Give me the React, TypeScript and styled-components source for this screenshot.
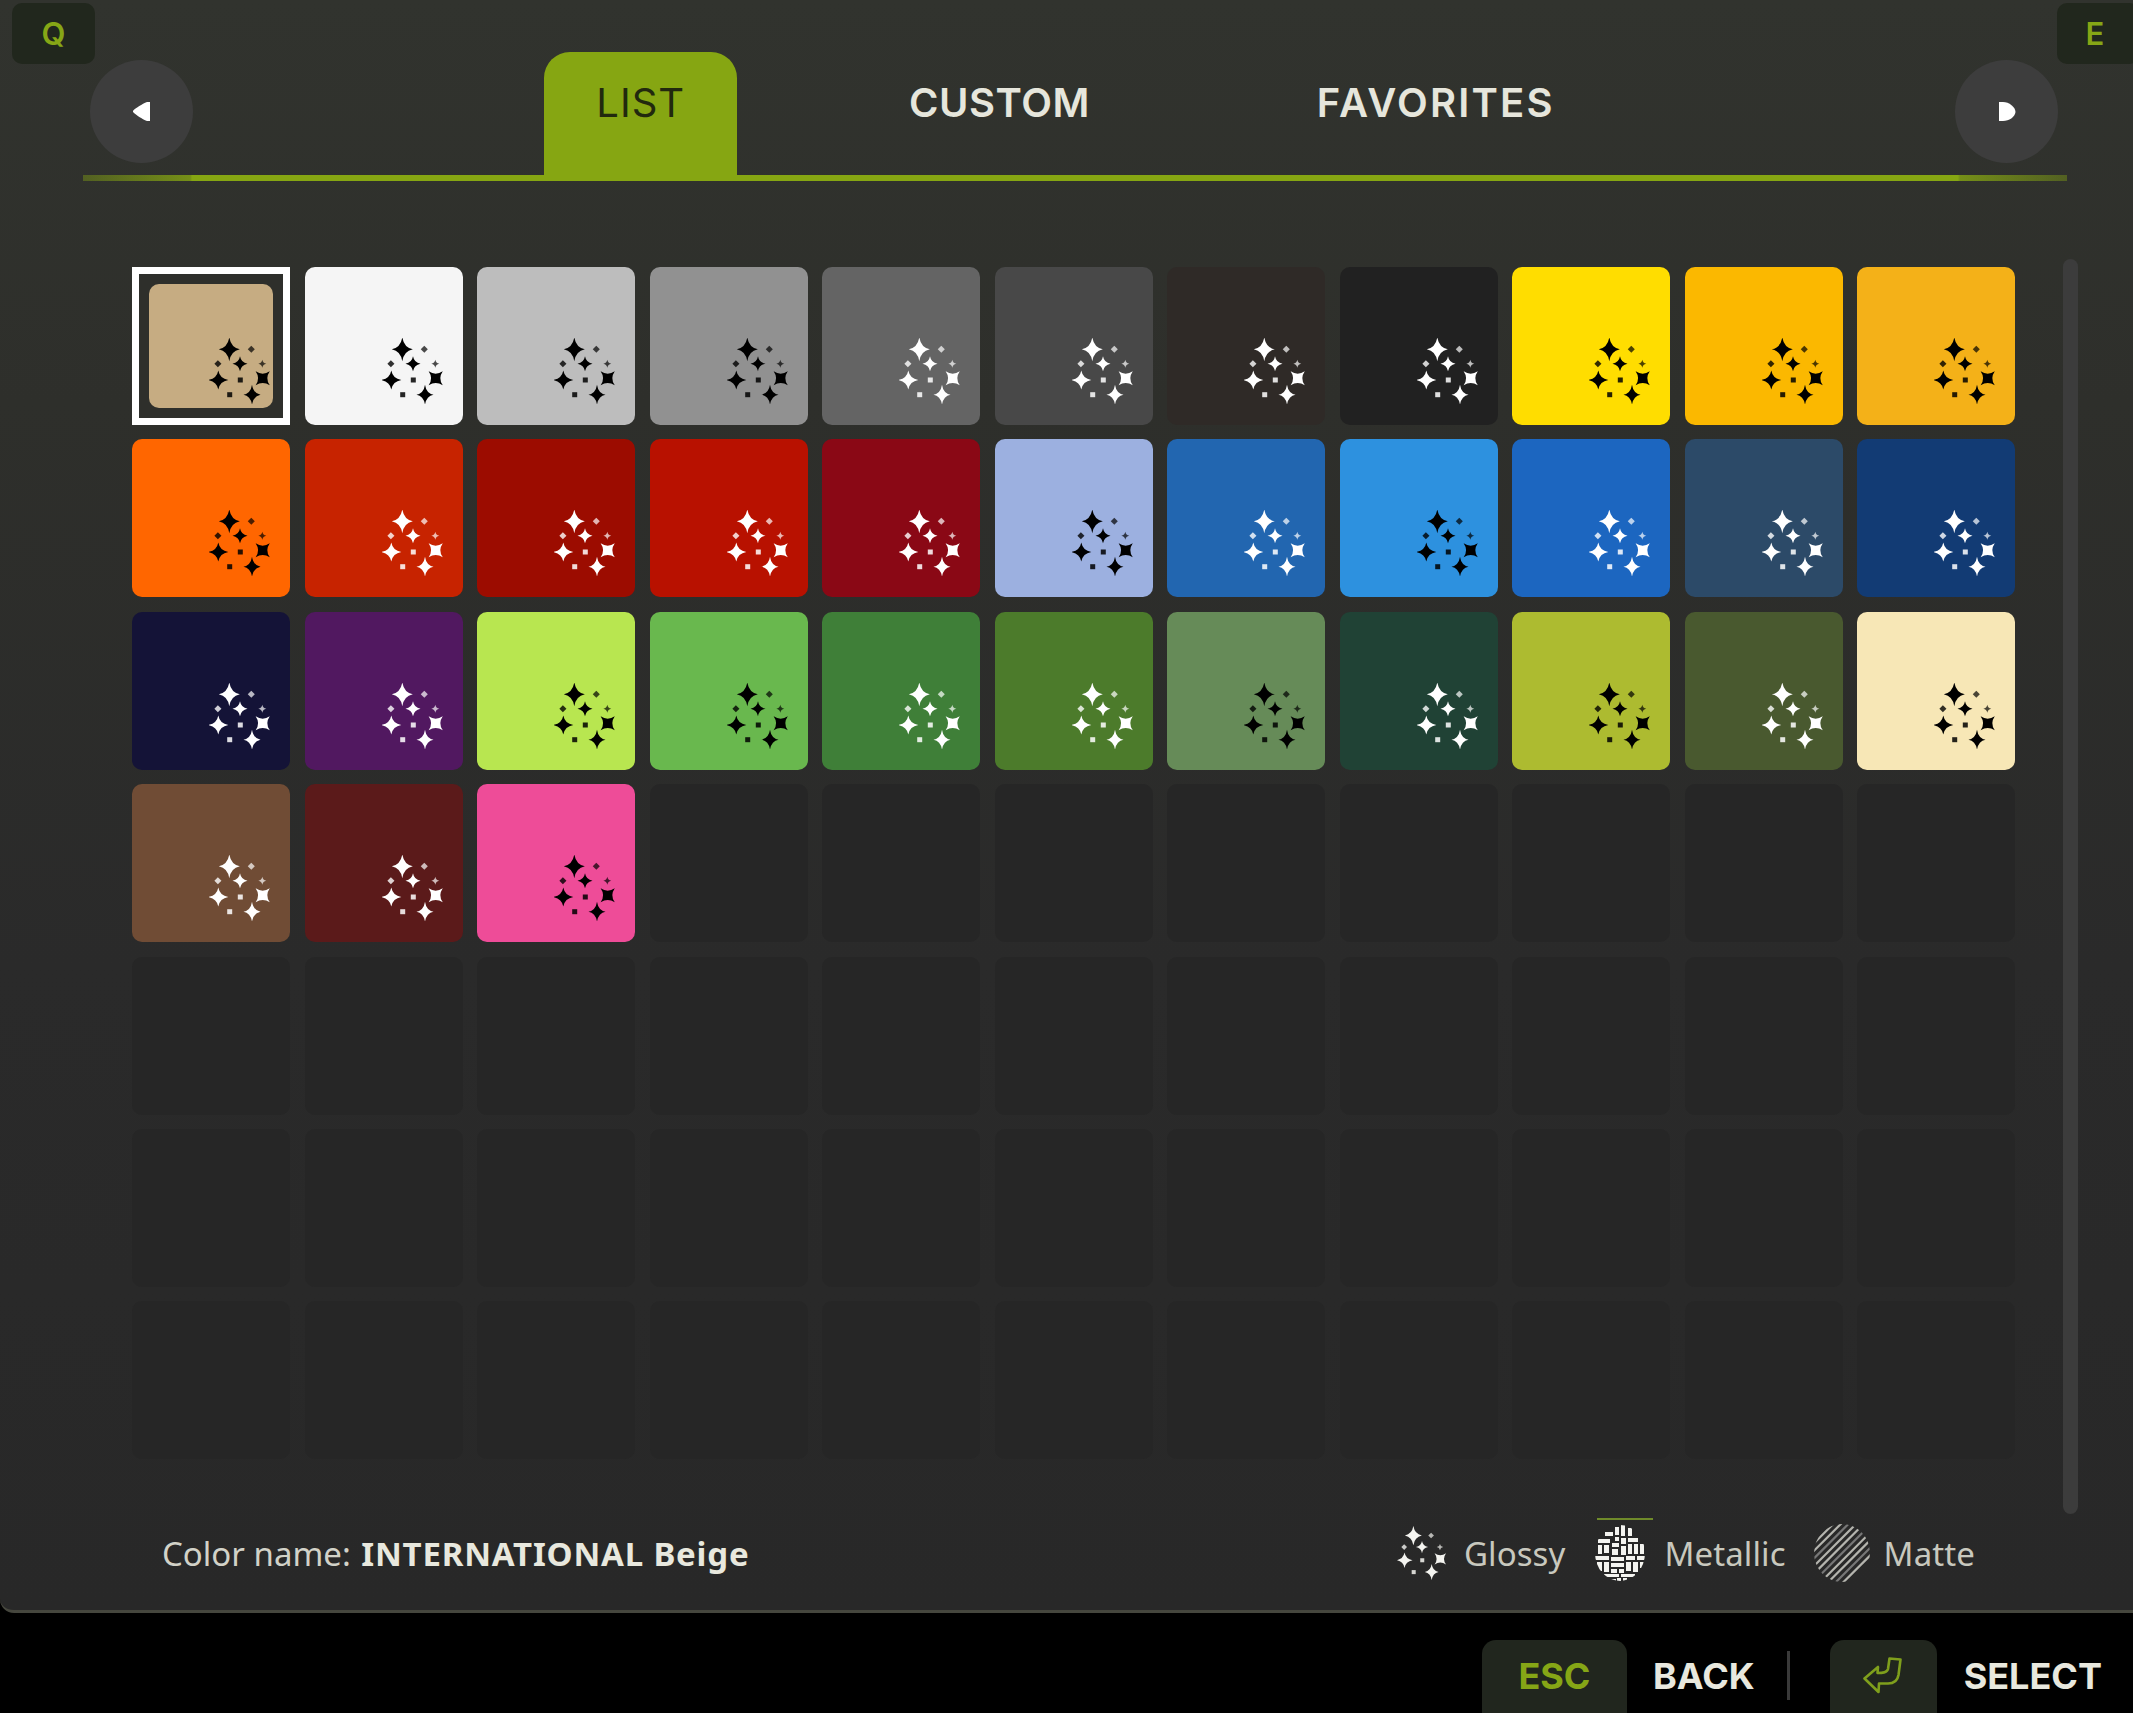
import React from 'react';
import styled, { createGlobalStyle } from 'styled-components';

const Global = createGlobalStyle`
  html, body { margin: 0; padding: 0; background: #000; }
  body { font-family: "Noto Sans", "Liberation Sans", sans-serif; overflow: hidden; }
`;

const Page = styled.div`
  width: 2133px;
  height: 1713px;
  display: flex;
  flex-direction: column;
  background: #000;
  overflow: hidden;
`;

const Panel = styled.section`
  position: relative;
  flex: 0 0 1613px;
  box-sizing: border-box;
  display: flex;
  flex-direction: column;
  background: linear-gradient(180deg, #31332e 0%, #2e2f2b 25%, #2a2a2a 60%, #282828 100%);
  border-bottom: 3px solid #46473e;
  border-bottom-left-radius: 14px;
`;

const KeyCap = styled.div<{ $side: 'left' | 'right' }>`
  position: absolute;
  top: 3px;
  ${p => (p.$side === 'left' ? 'left: 12px; width: 83px;' : 'right: -6px; width: 82px;')}
  height: 61px;
  border-radius: 10px;
  background: #21271d;
  color: #86a616;
  font-family: Inter, "Noto Sans", sans-serif;
  font-size: 31px;
  font-weight: 600;
  display: flex;
  align-items: center;
  justify-content: center;
  ${p => (p.$side === 'right' ? 'padding-right: 6px; box-sizing: border-box;' : '')}
`;

const Header = styled.header`
  display: flex;
  align-items: flex-start;
  justify-content: space-between;
  margin: 0 66px 0 83px;
  padding: 52px 9px 0 7px;
  height: 123px;
  box-sizing: content-box;
`;

const ArrowButton = styled.button`
  width: 103px;
  height: 103px;
  margin-top: 8px;
  padding: 0;
  border: 0;
  border-radius: 50%;
  background: #3d3d3d;
  display: flex;
  align-items: center;
  justify-content: center;
`;

const Tabs = styled.nav`
  display: flex;
  gap: 121px;
`;

const Tab = styled.div<{ $active?: boolean; $track: number }>`
  height: 123px;
  box-sizing: border-box;
  padding: ${p => (p.$active ? '25px 51.5px 0 52px' : '25px 53px 0')};
  margin: ${p => (p.$active ? '0 -1.5px 0 4px' : '0')};
  border-radius: 26px 26px 0 0;
  font-family: Inter, "Noto Sans", sans-serif;
  font-size: 40px;
  line-height: 52px;
  letter-spacing: ${p => p.$track}px;
  font-weight: ${p => (p.$active ? 400 : 600)};
  color: ${p => (p.$active ? '#22290e' : '#e6e6dc')};
  background: ${p => (p.$active ? '#86a612' : 'transparent')};
`;

const Rule = styled.div`
  height: 6px;
  margin: 0 66px 0 83px;
  background: linear-gradient(90deg, rgba(134,166,18,0.4) 0%, rgba(134,166,18,0.8) 5.4%, #86a612 5.5%, #86a612 94.5%, rgba(134,166,18,0.8) 94.6%, rgba(134,166,18,0.4) 100%);
`;

const Content = styled.div`
  display: flex;
  align-items: flex-start;
  margin-top: 78px;
  padding-left: 132px;
`;

const Grid = styled.div`
  display: grid;
  grid-template-columns: repeat(11, 158px);
  grid-auto-rows: 158px;
  column-gap: 14.5px;
  row-gap: 14.4px;
  padding-top: 8px;
`;

const Cell = styled.div<{ $bg?: string; $selected?: boolean }>`
  position: relative;
  box-sizing: border-box;
  border-radius: ${p => (p.$selected ? '0' : '10px')};
  background: ${p => p.$bg ?? '#262626'};
  ${p => (p.$selected ? 'border: 7px solid #fff; background: #2e2f2b; padding: 10px;' : '')}
`;

const SwatchFill = styled.div<{ $bg: string }>`
  width: 100%;
  height: 100%;
  border-radius: 10px;
  background: ${p => p.$bg};
`;

const SparkleSlot = styled.span`
  position: absolute;
  left: 77px;
  top: 71px;
  display: block;
  line-height: 0;
`;

const SparkleSlotSelected = styled(SparkleSlot)`
  left: 70px;
  top: 64px;
`;

const ScrollTrack = styled.div`
  width: 15px;
  height: 1255px;
  margin-left: 48px;
  border-radius: 8px;
  background: #3c3c3c;
`;

const InfoRow = styled.div`
  display: flex;
  align-items: center;
  justify-content: space-between;
  margin-top: 8px;
  padding: 0 158px 0 162px;
  height: 62px;
`;

const ColorName = styled.div`
  font-size: 33px;
  color: #d2d2c8;
  letter-spacing: 0;
  b { font-weight: 700; color: #e8e8de; letter-spacing: 0.8px; margin-left: 2px; }
`;

const Legend = styled.div`
  display: flex;
  align-items: center;
`;

const LegendItem = styled.div<{ $gap: number; $after: number }>`
  display: flex;
  align-items: center;
  gap: ${p => p.$gap}px;
  margin-right: ${p => p.$after}px;
  font-size: 33px;
  color: #c8c8be;
  letter-spacing: 0.1px;
`;

const MetallicMark = styled.span`
  position: relative;
  display: block;
  line-height: 0;
  &::before {
    content: '';
    position: absolute;
    left: 2px;
    right: -6px;
    top: -7px;
    height: 2px;
    background: #6f8a2a;
  }
`;

const Footer = styled.footer`
  flex: 1;
  display: flex;
  justify-content: flex-end;
  padding: 27px 31px 0 0;
  color: #e8e8de;
  font-family: Inter, "Noto Sans", sans-serif;
  font-size: 36px;
  font-weight: 700;
`;

const FooterKey = styled.div<{ $w: number }>`
  width: ${p => p.$w}px;
  height: 90px;
  border-radius: 14px;
  background: #21261e;
  color: #86a616;
  display: flex;
  justify-content: center;
  padding-top: 10px;
  box-sizing: border-box;
  line-height: 52px;
`;

const FooterLabel = styled.div<{ $left: number }>`
  margin-left: ${p => p.$left}px;
  padding-top: 10px;
  line-height: 52px;
`;

const Divider = styled.div`
  width: 3px;
  height: 49px;
  margin: 11px 40px 0 32px;
  background: #3a3a3a;
`;

const EnterWrap = styled.span`
  display: block;
  margin-top: 7px;
  line-height: 0;
`;

const star = (cx: number, cy: number, r: number, ry = r) => {
  const k = 0.15;
  const a = r * k;
  const b = ry * k;
  return `M${cx} ${cy - ry}Q${cx + a} ${cy - b} ${cx + r} ${cy}Q${cx + a} ${cy + b} ${cx} ${cy + ry}Q${cx - a} ${cy + b} ${cx - r} ${cy}Q${cx - a} ${cy - b} ${cx} ${cy - ry}Z`;
};

const Sparkles = ({ color, w = 62, h = 66 }: { color: string; w?: number; h?: number }) => (
  <svg width={w} height={h} viewBox="0 0 62 66">
    <g fill={color}>
      <path d={star(20.3, 11.3, 10.5, 12)} />
      <rect x="39.8" y="8.8" width="5" height="5" transform="rotate(45 42.3 11.3)" opacity="0.7" />
      <rect x="6.4" y="23.2" width="5" height="5" transform="rotate(45 8.9 25.7)" opacity="0.8" />
      <path d={star(31, 25.7, 7.5, 7.5)} />
      <path d={star(53.3, 25.7, 4, 4)} opacity="0.7" />
      <path d={star(9.3, 42, 10, 9.5)} />
      <rect x="28.8" y="39.5" width="5" height="5" opacity="0.85" />
      <path d={star(53.7, 40.3, 10, 10)} transform="rotate(45 53.7 40.3)" />
      <rect x="18.2" y="54.2" width="5" height="5" opacity="0.85" />
      <path d={star(43, 56.7, 8.5, 10)} />
    </g>
  </svg>
);

const weave: [number, number, number, number][] = [
  [20, 2, 4, 8], [26, 0, 4, 11], [33, 3, 4, 8],
  [10, 7, 8, 4], [20, 12, 4, 4], [26, 13, 5, 6], [33, 13, 10, 4],
  [3, 14, 12, 4], [3, 20, 4, 9], [9, 20, 5, 8], [17, 18, 7, 4], [17, 24, 6, 6], [26, 21, 5, 9], [33, 19, 4, 10], [39, 19, 4, 10], [45, 19, 4, 10],
  [0, 31, 14, 4], [16, 32, 13, 4], [31, 31, 9, 4], [42, 31, 8, 4],
  [2, 37, 5, 9], [9, 37, 5, 10], [16, 38, 13, 4], [31, 37, 5, 9], [38, 37, 5, 10], [45, 37, 4, 6], [16, 44, 6, 4], [24, 44, 5, 4],
  [9, 49, 15, 3], [26, 49, 14, 3], [16, 54, 5, 2], [22, 53, 4, 3], [28, 53, 4, 3],
];

const MetallicIcon = () => (
  <svg width="52" height="56" viewBox="0 0 52 56">
    <defs>
      <clipPath id="metal-clip"><ellipse cx="25" cy="28" rx="25" ry="28" /></clipPath>
    </defs>
    <g fill="#f4f4f0" clipPath="url(#metal-clip)">
      {weave.map(([x, y, w, h], i) => <rect key={i} x={x} y={y} width={w} height={h} />)}
    </g>
  </svg>
);

const MatteIcon = () => (
  <svg width="56" height="58" viewBox="0 0 56 58">
    <defs>
      <clipPath id="matte-clip"><ellipse cx="28" cy="29" rx="28" ry="29" /></clipPath>
    </defs>
    <g clipPath="url(#matte-clip)" strokeWidth="2.2">
      {Array.from({ length: 12 }, (_, i) => (
        <line key={i} x1={-4} y1={8 + i * 7.6} x2={64} y2={-60 + i * 7.6} stroke={i % 3 === 1 ? '#777' : '#b4b4ae'} />
      ))}
    </g>
  </svg>
);

const EnterIcon = () => (
  <svg width="40" height="38" viewBox="0 0 40 38" fill="none">
    <path d="M1.5 21.5 L15 10 L14.5 16 C19 16 24 16 25 12 L26.5 1.5 L37.5 2.5 L35.5 18 C34.5 24 30 26.5 25 26.5 L16 26.5 L15.5 35 Z" stroke="#7f9f1c" strokeWidth="2.6" strokeLinejoin="round" />
  </svg>
);

const LeftGlyph = () => (
  <svg width="20" height="21" viewBox="0 0 20 21"><path d="M18 1 V20 H15 C10 18 4 14 1.5 11.5 C0.8 10.8 0.8 10 1.5 9.3 C4 7 10 3 15 1 Z" fill="#fff" /></svg>
);
const RightGlyph = () => (
  <svg width="20" height="21" viewBox="0 0 20 21"><path d="M2 1 V20 H6 C12 20 18 16 18.5 11 C18.5 6 12 1 6 1 Z" fill="#fff" /></svg>
);

const K = '#000000';
const W = '#ffffff';
const swatches: [string, string][] = [
  ['#c6ac82', K], ['#f5f5f5', K], ['#bdbdbd', K], ['#919191', K], ['#646464', W], ['#484848', W], ['#2f2a27', W], ['#212121', W], ['#ffdd00', K], ['#fbb800', K], ['#f4b118', K],
  ['#ff6600', K], ['#c72300', W], ['#9c0c00', W], ['#b81100', W], ['#8a0815', W], ['#9cb0e0', K], ['#2266b0', W], ['#2d91df', K], ['#1c66c0', W], ['#2c4a68', W], ['#123b74', W],
  ['#141337', W], ['#511860', W], ['#b8e650', K], ['#69b84e', K], ['#3f7f38', W], ['#4c7b2b', W], ['#668b58', K], ['#204235', W], ['#adbb30', K], ['#49592f', W], ['#f7e7b6', K],
  ['#704c35', W], ['#5b1a1a', W], ['#ee4c98', K],
];

export default function App() {
  const blanks = 77 - swatches.length;
  return (
    <Page>
      <Global />
      <Panel>
        <KeyCap $side="left">Q</KeyCap>
        <KeyCap $side="right">E</KeyCap>
        <Header>
          <ArrowButton aria-label="previous"><LeftGlyph /></ArrowButton>
          <Tabs>
            <Tab $active $track={1}>LIST</Tab>
            <Tab $track={0.5}>CUSTOM</Tab>
            <Tab $track={2.2}>FAVORITES</Tab>
          </Tabs>
          <ArrowButton aria-label="next"><RightGlyph /></ArrowButton>
        </Header>
        <Rule />
        <Content>
          <Grid>
            {swatches.map(([bg, fg], i) =>
              i === 0 ? (
                <Cell key={i} $selected>
                  <SwatchFill $bg={bg} />
                  <SparkleSlotSelected><Sparkles color={fg} /></SparkleSlotSelected>
                </Cell>
              ) : (
                <Cell key={i} $bg={bg}>
                  <SparkleSlot><Sparkles color={fg} /></SparkleSlot>
                </Cell>
              ),
            )}
            {Array.from({ length: blanks }, (_, i) => <Cell key={`b${i}`} />)}
          </Grid>
          <ScrollTrack />
        </Content>
        <InfoRow>
          <ColorName>Color name: <b>INTERNATIONAL Beige</b></ColorName>
          <Legend>
            <LegendItem $gap={17} $after={30}><Sparkles color="#f4f4f0" w={50} h={54} />Glossy</LegendItem>
            <LegendItem $gap={17} $after={28}><MetallicMark><MetallicIcon /></MetallicMark>Metallic</LegendItem>
            <LegendItem $gap={14} $after={0}><MatteIcon />Matte</LegendItem>
          </Legend>
        </InfoRow>
      </Panel>
      <Footer>
        <FooterKey $w={145}>ESC</FooterKey>
        <FooterLabel $left={26}>BACK</FooterLabel>
        <Divider />
        <FooterKey $w={107}><EnterWrap><EnterIcon /></EnterWrap></FooterKey>
        <FooterLabel $left={27}>SELECT</FooterLabel>
      </Footer>
    </Page>
  );
}
